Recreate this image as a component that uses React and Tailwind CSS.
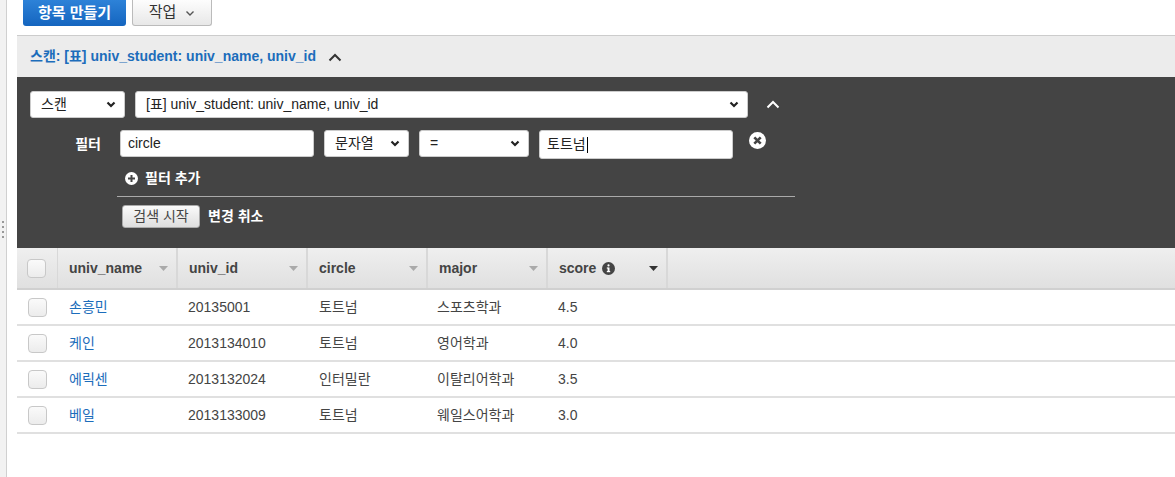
import React from 'react';

const font = { fontFamily: '"Liberation Sans", "Noto Sans CJK KR", Arial, sans-serif' };

const rows = [
  { name: '손흥민', id: '20135001', circle: '토트넘', major: '스포츠학과', score: '4.5' },
  { name: '케인', id: '2013134010', circle: '토트넘', major: '영어학과', score: '4.0' },
  { name: '에릭센', id: '2013132024', circle: '인터밀란', major: '이탈리어학과', score: '3.5' },
  { name: '베일', id: '2013133009', circle: '토트넘', major: '웨일스어학과', score: '3.0' },
];

const ChevronUp = ({ className }) => (
  <svg className={className} width="14" height="9" viewBox="0 0 14 9" fill="none">
    <polyline points="1.5,7.5 7,2 12.5,7.5" stroke="currentColor" strokeWidth="2" />
  </svg>
);

const ChevronDown = ({ className, w = 10, h = 7, sw = 2.2 }) => (
  <svg className={className} width={w} height={h} viewBox="0 0 10 7" fill="none">
    <polyline points="1.5,1.5 5,5 8.5,1.5" stroke="currentColor" strokeWidth={sw} />
  </svg>
);

const SortCaret = ({ dark }) => (
  <svg width="9" height="5" viewBox="0 0 9 5">
    <polygon points="0,0 9,0 4.5,5" fill={dark ? '#333' : '#aaa'} />
  </svg>
);

const Select = ({ label, className }) => (
  <div className={`flex h-[27px] items-center justify-between rounded-[3px] border border-[#ccc] bg-white pl-2.5 pr-2 text-[14px] text-[#222] ${className}`}>
    <span>{label}</span>
    <ChevronDown className="text-[#222]" />
  </div>
);

const Checkbox = () => (
  <div className="h-[19px] w-[19px] rounded-[4px] border border-[#c8c8c8] bg-gradient-to-b from-[#fafafa] to-[#ececec]" />
);

const cols = [
  { key: 'name', label: 'univ_name', w: 'w-[120px]' },
  { key: 'id', label: 'univ_id', w: 'w-[130px]' },
  { key: 'circle', label: 'circle', w: 'w-[120px]' },
  { key: 'major', label: 'major', w: 'w-[120px]' },
  { key: 'score', label: 'score', w: 'w-[120px]' },
];

export default function App() {
  return (
    <div className="flex h-[477px] w-[1175px] overflow-hidden bg-white" style={font}>
      {/* left gutter */}
      <div className="flex w-[7px] shrink-0 flex-col items-start justify-center border-r border-[#d0d0d0] bg-[#f2f2f2] pl-[2px]">
        <div className="flex flex-col gap-[3px] pb-[18px]">
          {[0, 1, 2, 3].map((i) => (
            <div key={i} className="h-[2px] w-[2px] bg-[#999]" />
          ))}
        </div>
      </div>

      <div className="flex-1 pl-[10px]">
        {/* top buttons */}
        <div className="flex gap-[6px] pl-[6px]">
          <div className="flex h-[26px] w-[103px] items-center justify-center rounded-b-[3px] bg-gradient-to-b from-[#2d82d8] to-[#1465bf] text-[15px] font-bold text-white">
            항목 만들기
          </div>
          <div className="flex h-[26px] w-[80px] items-center justify-center gap-[9px] rounded-b-[3px] border border-t-0 border-[#bbb] bg-gradient-to-b from-[#fdfdfd] to-[#e8e8e8] text-[15px] text-[#333]">
            작업
            <ChevronDown className="mt-[2px] text-[#555]" w={10} h={7} sw={1.4} />
          </div>
        </div>

        {/* scan header */}
        <div className="mt-[9px] flex h-[42px] items-center gap-3 border-t border-[#ccc] bg-[#ececec] pl-[13px]">
          <span className="text-[14px] font-bold text-[#1c6dbb]">스캔: [표] univ_student: univ_name, univ_id</span>
          <ChevronUp className="mt-[2px] text-[#333]" />
        </div>

        {/* dark filter panel */}
        <div className="h-[171px] bg-[#444444] pl-[13px] pt-[14px]">
          <div className="flex items-center">
            <Select label="스캔" className="w-[95px]" />
            <Select label="[표] univ_student: univ_name, univ_id" className="ml-[10px] w-[613px]" />
            <ChevronUp className="ml-[18px] text-white" />
          </div>
          <div className="mt-[12px] flex items-start">
            <span className="w-[90px] pt-[4px] pr-[19px] text-right text-[14px] font-bold text-white">필터</span>
            <div className="flex h-[27px] w-[194px] items-center rounded-[3px] border border-[#ccc] bg-white pl-[7px] text-[14px] text-[#222]">circle</div>
            <Select label="문자열" className="ml-[10px] w-[85px]" />
            <Select label="=" className="ml-[10px] w-[110px]" />
            <div className="ml-[10px] flex h-[29px] w-[194px] items-center rounded-[3px] border border-[#ccc] bg-white pl-[7px] text-[14px] text-[#222]">
              토트넘<span className="ml-[1px] h-[16px] w-px bg-black" />
            </div>
            <svg className="ml-[16px] mt-[2px]" width="17" height="17" viewBox="0 0 17 17">
              <circle cx="8.5" cy="8.5" r="8.5" fill="white" />
              <path d="M5.3 5.3 L11.7 11.7 M11.7 5.3 L5.3 11.7" stroke="#444" strokeWidth="2.6" />
            </svg>
          </div>
          <div className="ml-[95px] mt-[9px] flex items-center gap-[7px] text-[14px] font-bold text-white">
            <svg width="13" height="13" viewBox="0 0 13 13">
              <circle cx="6.5" cy="6.5" r="6.5" fill="white" />
              <path d="M6.5 3 V10 M3 6.5 H10" stroke="#444" strokeWidth="2" />
            </svg>
            필터 추가
          </div>
          <div className="ml-[87px] mt-[7px] h-px w-[678px] bg-[#aaa]" />
          <div className="ml-[92px] mt-[8px] flex items-center gap-[8px]">
            <div className="flex h-[23px] w-[78px] items-center justify-center rounded-[3px] border border-[#aaa] bg-gradient-to-b from-[#fafafa] to-[#dedede] text-[14px] text-[#444]">
              검색 시작
            </div>
            <span className="text-[14px] font-bold text-white">변경 취소</span>
          </div>
        </div>

        {/* table header */}
        <div className="flex h-[42px] border-b-2 border-[#d0d0d0] bg-gradient-to-b from-[#efefef] to-[#e0e0e0]">
          <div className="flex w-[41px] items-center justify-center border-r border-[#d8d8d8] pr-px">
            <Checkbox />
          </div>
          {cols.map((c) => (
            <div key={c.key} className={`flex ${c.w} items-center justify-between border-r-2 border-[#d8d8d8] pl-[11px] pr-[8px]`}>
              <span className="flex items-center gap-[6px] text-[14px] font-bold text-[#444]">
                {c.label}
                {c.key === 'score' && (
                  <svg width="13" height="13" viewBox="0 0 13 13">
                    <circle cx="6.5" cy="6.5" r="6.5" fill="#444" />
                    <rect x="5.6" y="5.5" width="1.9" height="4.5" fill="white" />
                    <rect x="4.8" y="9" width="3.4" height="1.2" fill="white" />
                    <rect x="4.8" y="5.5" width="1.5" height="1.1" fill="white" />
                    <circle cx="6.5" cy="3.4" r="1.1" fill="white" />
                  </svg>
                )}
              </span>
              <SortCaret dark={c.key === 'score'} />
            </div>
          ))}
        </div>

        {/* table rows */}
        {rows.map((r) => (
          <div key={r.id} className="flex h-[36px] items-center border-b-2 border-[#e0e0e0] text-[14px] text-[#444]">
            <div className="flex w-[41px] justify-center pr-px">
              <Checkbox />
            </div>
            <div className="w-[120px] pl-[11px] text-[#1c6dbb]">{r.name}</div>
            <div className="w-[130px] pl-[10px]">{r.id}</div>
            <div className="w-[120px] pl-[11px]">{r.circle}</div>
            <div className="w-[120px] pl-[9px]">{r.major}</div>
            <div className="w-[120px] pl-[10px]">{r.score}</div>
          </div>
        ))}
      </div>
    </div>
  );
}
